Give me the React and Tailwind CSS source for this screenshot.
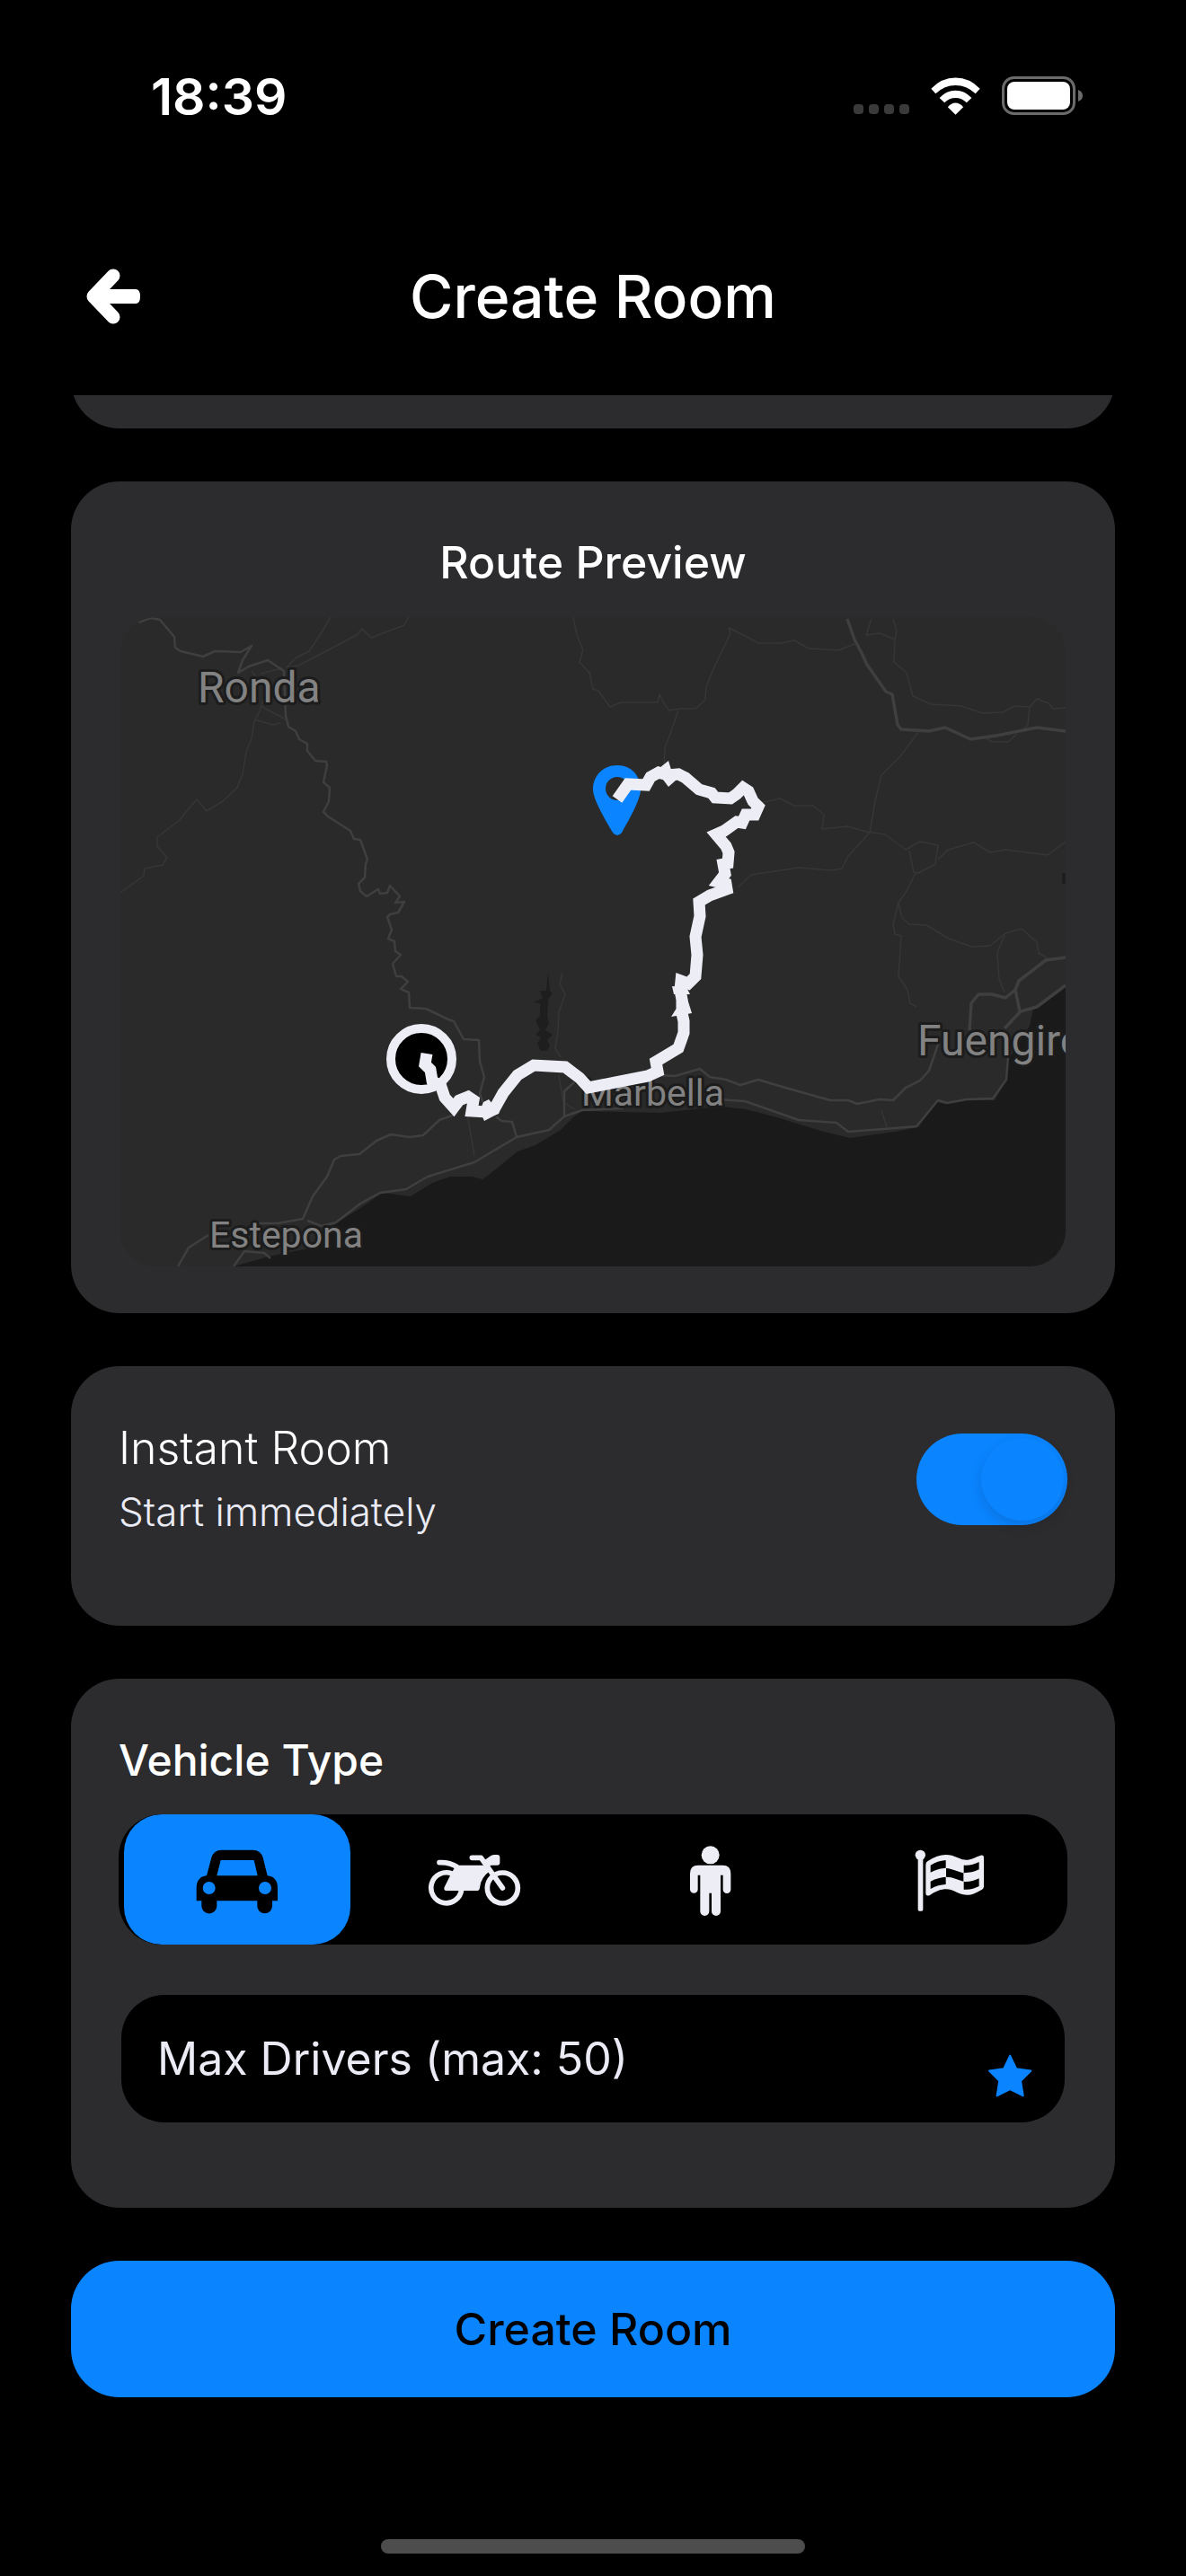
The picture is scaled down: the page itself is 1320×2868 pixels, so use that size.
import React, { useState } from 'react';

const CarIcon = () => (
  <svg viewBox="30 16 288 252" className="w-24 h-[84px]" fill="currentColor" aria-hidden="true">
    <path
      fillRule="evenodd"
      d="M72 128 L88 68 Q95 42 122 42 H226 Q253 42 260 68 L275 128 Q309 132 309 170 V212 H291 V230 A25 24 0 0 1 241 230 V212 H106 V230 A25 24 0 0 1 55 230 V212 H38 V170 Q38 132 72 128 Z M106 128 H242 L230 76 H119 Z M80 148 A21 21 0 1 0 80 190 A21 21 0 1 0 80 148 Z M267 148 A21 21 0 1 0 267 190 A21 21 0 1 0 267 148 Z"
    />
  </svg>
);

const MotorcycleIcon = () => (
  <svg viewBox="806 16 324 252" className="w-[108px] h-[84px]" fill="none" stroke="currentColor" aria-hidden="true">
    <path d="M925 174 A51 51 0 1 1 893 121" strokeWidth="17" />
    <circle cx="1062" cy="169" r="51" strokeWidth="17" />
    <path d="M851 84 Q885 82 912 100 M960 68 H990 L1062 169" strokeWidth="17" strokeLinecap="round" strokeLinejoin="round" />
    <path
      fill="currentColor"
      stroke="none"
      d="M898 108 Q905 93 920 93 H998 L1020 112 Q988 135 986 168 Q985 178 976 178 H876 Q864 177 868 166 L890 122 Z M1002 76 L1020 63 Q1026 58 1034 58 H1044 Q1053 58 1053 67 V84 Q1053 93 1044 93 H1024 L1014 100 Z"
    />
  </svg>
);

const PersonIcon = () => (
  <svg viewBox="-17 31 288 252" className="w-24 h-[84px]" fill="currentColor" aria-hidden="true">
    <circle cx="123" cy="74" r="30" />
    <path d="M82 108 H164 Q191 108 191 136 V189 A12 12 0 0 1 165 189 V141 H157 V262 A15 15 0 0 1 127 262 V201 H119 V262 A15 15 0 0 1 89 262 V141 H81 V189 A13 12 0 0 1 55 189 V136 Q55 108 82 108 Z" />
  </svg>
);

const FlagIcon = () => (
  <svg viewBox="776 31 288 252" className="w-24 h-[84px]" fill="currentColor" aria-hidden="true">
    <circle cx="825" cy="74" r="17" />
    <path d="M817 80 H834 V256 Q834 261 829 261 H822 Q817 261 817 256 Z" />
    <path
      fillRule="evenodd"
      d="M843 106 Q843 97 850 94 C885 72 915 65 950 83 C985 100 1000 83 1027 75 Q1037 72 1037 84 V179 Q1037 186 1031 189 C1000 207 980 214 948 199 C920 183 895 183 858 207 Q843 215 843 200 Z
      M859 108 V132 C880 121 895 118 910 117 V91 C890 93 875 98 859 108 Z
      M911 118 V147 C935 147 950 157 969 162 V134 C950 130 935 120 911 118 Z
      M970 108 V134 C990 133 1005 130 1021 122 V97 C1005 104 990 110 970 108 Z
      M859 162 V187 C878 177 893 173 910 172 V147 C893 148 878 152 859 162 Z
      M970 163 V189 C990 191 1005 186 1021 178 V152 C1005 160 990 164 970 163 Z"
    />
  </svg>
);

const vehicles = [
  { id: 'car', label: 'Car', Icon: CarIcon },
  { id: 'motorcycle', label: 'Motorcycle', Icon: MotorcycleIcon },
  { id: 'walk', label: 'On foot', Icon: PersonIcon },
  { id: 'race', label: 'Race', Icon: FlagIcon },
];

const StatusBar = () => (
  <div className="flex items-center justify-between h-[214px] pl-[168px] pr-[115px]">
    <span className="text-[57px] leading-none font-semibold">18:39</span>
    <div className="flex items-center gap-6">
      <div className="flex gap-1.5 pt-7">
        <span className="w-[11px] h-[11px] rounded bg-[#3a3a3a]" />
        <span className="w-[11px] h-[11px] rounded bg-[#3a3a3a]" />
        <span className="w-[11px] h-[11px] rounded bg-[#3a3a3a]" />
        <span className="w-[11px] h-[11px] rounded bg-[#3a3a3a]" />
      </div>
      <svg viewBox="314 46 166 126" className="w-[55px] h-[42px]" fill="white" aria-label="Wi-Fi">
        <path d="M315 84 Q350 47 397 47 Q444 47 479 84 L464 101 Q434 73 397 73 Q360 73 330 101 Z" />
        <path d="M343 115 Q366 90 397 90 Q428 90 451 115 L434 131 Q418 115 397 115 Q376 115 360 131 Z" />
        <path d="M371 146 Q383 132 397 132 Q411 132 423 146 L397 172 Z" />
      </svg>
      <svg viewBox="0 0 90 44" className="w-[90px] h-11" aria-label="Battery">
        <rect x="1.5" y="1.5" width="79" height="40" rx="12" fill="none" stroke="#6b6b6b" strokeWidth="3" />
        <rect x="6" y="6" width="70" height="31" rx="8" fill="white" />
        <path d="M85 15 Q90 17 90 21.5 Q90 26 85 28 Z" fill="#6b6b6b" />
      </svg>
    </div>
  </div>
);

const RouteMap = () => (
  <svg viewBox="0 0 1052 723" className="block w-full rounded-[40px]" role="img" aria-label="Route near Marbella">
    <rect width="1052" height="723" fill="#2a2a2a" />
    {/* sea and lake */}
    <path
      fill="#1a1a1a"
      d="M1052 410 L1016 436 L1012 455 L988 493 L986 516 L973 538 L941 538 L917 542 L909 540 L888 568 L862 573 L812 580 L783 573 L727 556 L696 548 L668 545 L600 552 L514 550 L505 556 L490 571 L462 588 L442 595 L410 621 L403 626 L391 623 L367 623 L347 630 L323 645 L292 641 L264 660 L240 675 L209 703 L165 712 L126 723 L1052 723 Z"
    />
    <path
      fill="#1e1e1e"
      d="M476 396 L478 416 L481 419 L476 426 L475 444 L477 452 L473 460 L481 465 L475 471 L478 478 L474 483 L468 483 L464 475 L468 468 L462 465 L467 460 L462 449 L467 444 L467 430 L460 429 L470 424 L467 416 L474 416 Z M1048 285 L1052 285 L1052 297 L1048 297 Z"
    />
    {/* roads */}
    <g fill="none" stroke="#363636" strokeWidth="1.5" strokeLinejoin="round">
      <path d="M234 0 L222 20 L210 38 L196 45 L185 56 L198 54 L225 40 L263 20 L269 13 L279 23 L316 9 L321 0" />
      <path d="M159 92 L155 105 L149 116 L146 135 L140 150 L136 175 L130 190 L114 205 L96 216 L85 203 L72 218 L66 226 L41 245 L41 255 L52 268 L47 276 L27 280 L26 288 L0 307" />
      <path d="M156 99 L184 114 M149 114 L170 120 L178 118 M146 60 L152 68 M156 63 L180 57" />
      <path d="M504 0 L508 20 L515 37 L511 50 L522 62 L526 80 L532 82 L545 100 L557 95 L598 95 L600 86 L605 96 L611 104 L623 102 L640 102 L651 92 L652 78 L659 60 L671 35 L679 18 L677 12 L693 20 L710 29 L735 29 L750 26 L766 35 L799 37 L820 29" />
      <path d="M621 104 L612 130 L606 145 L605 170" />
      <path d="M836 2 L830 20 L845 18 L862 25 L861 50 L875 62 L882 88 L902 97 L935 99 L960 107 L982 106 L995 99 L1012 100 L1020 91 L1033 96 L1038 102 L1052 101 M860 2 L864 15 L862 25 M1012 100 L1010 120 L1002 128 M962 134 L970 139 L988 139 L998 130" />
      <path d="M888 128 L868 155 L847 176 L840 205 L834 240 L810 266 L803 280 L791 282 L755 279 L702 287 L687 301" />
      <path d="M713 207 L734 202 L750 210 L771 210 L783 220 L781 236 L809 233 L830 239 L851 242 L874 259 L890 250 L910 254 L907 275 L888 285 L883 284 L878 260 M910 270 L921 259 L950 251 L968 262 L985 259 L1032 265 L1052 250" />
      <path d="M885 285 L875 305 L866 318 L870 335 L878 342 L897 343 L922 358 L947 367 L968 366 L985 352 L1003 347 L1020 362 L1022 374 L1032 380 M866 318 L860 342 L862 353 L869 355 L866 400 L876 415 L879 430 L886 434 M984 354 L976 374 L978 402 L984 418" />
      <path d="M386 553 L394 600 M488 510 L493 540 L505 548 M847 549 L853 568" />
      <path d="M492 396 L489 408 L495 420 L488 440 L487 460 L484 480 L490 490" />
    </g>
    <g fill="none" stroke="#3f3f3f" strokeWidth="2.5" strokeLinejoin="round">
      <path d="M20 6 L34 1 L44 3 L60 22 L61 34 L67 38 L92 44 L105 38 L134 39 L146 32 L136 48 L131 62 L143 55 L164 48 L182 60 L184 110 L187 122 L195 127 L199 136 L208 141 L208 149 L217 160 L229 161 L230 165 L226 184 L233 190 L232 205 L226 217 L231 222 L256 238 L260 247 L267 248 L275 270 L273 275 L272 290 L265 297 L267 305 L274 311 L287 303 L289 308 L297 307 L300 299 L311 311 L306 318 L316 317 L309 329 L300 331 L297 334 L302 348 L298 358 L305 361 L306 372 L312 376 L303 386 L307 400 L313 400 L320 406 L312 414 L321 418 L322 435 L340 436 L365 448 L371 450 L382 470 L399 471 L400 495 L405 512 L400 530 L403 540" />
      <path d="M809 2 L817 25 L824 38 L831 53 L852 83 L859 86 L865 120 L869 125 L900 127 L918 123 L946 136 L975 132 L1020 123 L1052 127" strokeWidth="3.5" />
      <path d="M148 675 L175 675 L203 670 L214 645 L230 623 L238 604 L245 600 L266 598 L285 583 L301 576 L322 579 L337 577 L355 560 L372 554 M64 723 L76 702 L98 688" />
      <path d="M208 672 L224 678 L240 674 L267 653 L289 641 L318 637 L342 623 L394 607 L441 579 L477 571 L494 556 L514 549 L560 547 M418 556 L424 561 L436 562 L441 579 M494 556 L494 528 L505 518" />
      <path d="M126 723 L138 706 L160 708 L167 714" />
      <path d="M600 510 L617 511 L645 503 L656 512 L674 515 L690 521 L710 515 L740 524 L790 538 L810 538 L820 542 L845 537 L860 538 L874 524 L890 516 L900 505 L912 470 M664 537 L695 539 L718 547 L755 560 L797 563 L810 573 L886 567 L910 538 L920 541 L942 537 L971 536 L986 515 L988 490" />
      <path d="M945 460 L947 430 L955 420 L970 420 L985 424 L996 415 L1000 405 L1030 382 L1052 379 M996 415 L1001 439 M984 458 L1002 439 L1020 434 L1052 410" strokeWidth="3.5" />
    </g>
    {/* place names */}
    <g
      fill="#828282"
      stroke="#1c1c1c"
      strokeWidth="6"
      strokeLinejoin="round"
      className="font-[Roboto,sans-serif] [paint-order:stroke]"
    >
      <text x="86" y="95" fontSize="48">Ronda</text>
      <text x="99" y="702" fontSize="41">Estepona</text>
      <text x="513" y="544" fontSize="41">Marbella</text>
      <text x="887" y="488" fontSize="48">Fuengirola</text>
    </g>
    {/* markers */}
    <path
      fill="#0a84ff"
      fillRule="evenodd"
      d="M553 165 C568 165 579 176 579 192 C579 203 566 226 558 240 Q553 246 548 240 C540 226 526 203 526 192 C526 176 538 165 553 165 Z M553 178 A13 13 0 1 0 553 204 A13 13 0 1 0 553 178 Z"
    />
    <circle cx="335" cy="492" r="34" fill="black" stroke="#ededf5" strokeWidth="10" />
    {/* route */}
    <path
      fill="none"
      stroke="#ededf5"
      strokeWidth="13"
      d="M553 203 L565 186 L585 187 L590 178 L599 173 L609 176 L621 175 L629 179 L644 192 L658 196 L662 201 L679 202 L686 197 L693 190 L699 194 L704 205 L710 211 L706 220 L696 220 L692 229 L686 228 L672 238 L663 242 L674 255 L677 262 L676 274 L671 275 L673 286 L666 295 L674 297 L675 303 L656 310 L644 317 L645 333 L640 356 L642 376 L640 400 L632 408 L624 405 L623 415 L625 426 L625 441 L627 450 L627 463 L621 480 L596 495 L598 506 L587 511 L521 524 L511 513 L495 501 L460 499 L442 510 L426 530 L416 548 L407 551 L391 550 L393 538 L387 534 L377 538 L371 546 L361 535 L357 523 L347 516 L345 504 L339 498 L341 486"
    />
    <path
      fill="#ededf5"
      d="M600 168 L610 160 L613 170 L619 181 L610 189 L604 181 Z M618 437 L613 445 L636 441 L631 425 Z M616 420 L614 411 L630 412 L634 420 Z M404 540 L410 537 L422 552 L405 561 L400 550 Z"
    />
  </svg>
);

const Card = ({ className = '', children }) => (
  <section className={`bg-[#2c2c2e] rounded-[54px] ${className}`}>{children}</section>
);

export default function App() {
  const [instant, setInstant] = useState(true);
  const [vehicle, setVehicle] = useState('car');
  const [maxDrivers, setMaxDrivers] = useState('');

  return (
    <div className="min-h-screen flex flex-col bg-black text-white font-[Inter,sans-serif]">
      <StatusBar />

      <header className="grid grid-cols-[62px_1fr_62px] items-center h-[226px] pt-1.5 px-[95px]">
        <button type="button" aria-label="Back">
          <svg viewBox="0 0 62 64" className="w-[62px] h-16" fill="none" stroke="white" strokeWidth="15" strokeLinejoin="round" aria-hidden="true">
            <path d="M31 9 L9 32 L31 55" strokeLinecap="round" />
            <path fill="white" stroke="none" d="M8 24 H56 Q61 24 61 32 Q61 40 56 40 H8 Z" />
          </svg>
        </button>
        <h1 className="text-center text-[66px] leading-none font-medium">Create Room</h1>
      </header>

      <main className="flex flex-col gap-[59px] px-[79px]">
        {/* tail of the card scrolled under the header */}
        <div className="flex flex-col justify-end h-[37px] overflow-hidden">
          <Card className="h-32 shrink-0" />
        </div>

        <Card className="px-[55px] pt-[60px] pb-[52px]">
          <h2 className="mb-[31px] text-center text-[50px] leading-[60px] font-medium">Route Preview</h2>
          <RouteMap />
        </Card>

        <Card className="flex items-start justify-between px-[53px] pt-[60px] pb-[97px]">
          <label htmlFor="instant">
            <span className="block text-[50px] leading-[62px] font-light">Instant Room</span>
            <span className="block pt-2.5 text-[44px] leading-[60px] font-light text-[#ebebf5]">Start immediately</span>
          </label>
          <input
            id="instant"
            type="checkbox"
            role="switch"
            checked={instant}
            onChange={(e) => setInstant(e.target.checked)}
            className="appearance-none flex items-center w-[168px] h-[102px] mt-[15px] p-1 rounded-full bg-[#39393d] checked:bg-[#0a84ff] checked:justify-end before:content-[''] before:block before:w-[92px] before:h-[92px] before:rounded-full before:bg-[#0a84ff] before:shadow-[0_6px_14px_rgba(0,0,0,0.12)]"
          />
        </Card>

        <Card className="px-[53px] pt-[60px] pb-[95px]">
          <fieldset>
            <legend className="mb-[29px] text-[48px] leading-[62px] font-medium">Vehicle Type</legend>
            <div className="grid grid-cols-4 h-[145px] rounded-[48px] bg-black overflow-hidden">
              {vehicles.map(({ id, label, Icon }) => (
                <label
                  key={id}
                  className={`relative flex items-center justify-center mx-1.5 rounded-[42px] ${
                    vehicle === id ? 'bg-[#0a84ff] text-black' : 'text-[#ededf5]'
                  }`}
                >
                  <input
                    type="radio"
                    name="vehicle"
                    value={id}
                    aria-label={label}
                    checked={vehicle === id}
                    onChange={() => setVehicle(id)}
                    className="sr-only"
                  />
                  <Icon />
                </label>
              ))}
            </div>
          </fieldset>
          <div className="relative mt-14 mx-[3px]">
            <input
              type="text"
              inputMode="numeric"
              aria-label="Max Drivers"
              placeholder="Max Drivers (max: 50)"
              value={maxDrivers}
              onChange={(e) => setMaxDrivers(e.target.value)}
              className="block w-full h-[142px] pl-10 pr-28 rounded-[48px] bg-black text-[50px] font-normal placeholder:text-[#ebebf5] placeholder:opacity-100 outline-none"
            />
            <svg viewBox="1048 739 149 145" className="absolute right-9 bottom-7 w-[50px] h-12" fill="#0a84ff" stroke="#0a84ff" strokeWidth="6" strokeLinejoin="round" aria-hidden="true">
              <path d="M1123 744 L1144 788 L1193 795 L1159 829 L1167 879 L1123 857 L1079 879 L1087 829 L1053 795 L1102 788 Z" />
            </svg>
          </div>
        </Card>

        <button type="button" className="h-[152px] rounded-[54px] bg-[#0a84ff] text-black text-[50px] leading-none font-medium">
          Create Room
        </button>
      </main>

      <div className="w-[472px] h-4 mt-auto mb-[25px] mx-auto rounded-full bg-[#4d4d4d]" />
    </div>
  );
}
